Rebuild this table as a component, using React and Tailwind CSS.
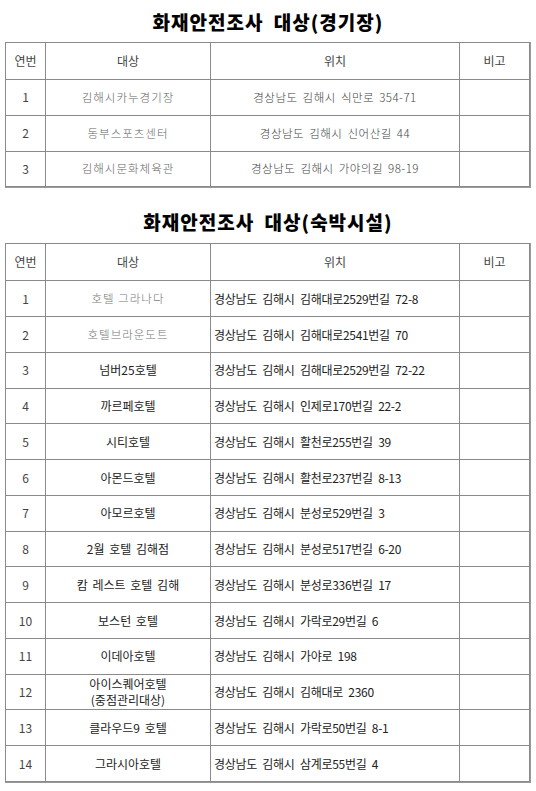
import React from 'react';

const stadiums = [
  { no: 1, name: '김해시카누경기장', addr: '경상남도 김해시 식만로 354-71' },
  { no: 2, name: '동부스포츠센터', addr: '경상남도 김해시 신어산길 44' },
  { no: 3, name: '김해시문화체육관', addr: '경상남도 김해시 가야의길 98-19' },
];

const lodgings = [
  { no: 1, name: '호텔 그라나다', addr: '경상남도 김해시 김해대로2529번길 72-8', faded: true },
  { no: 2, name: '호텔브라운도트', addr: '경상남도 김해시 김해대로2541번길 70', faded: true },
  { no: 3, name: '넘버25호텔', addr: '경상남도 김해시 김해대로2529번길 72-22' },
  { no: 4, name: '까르페호텔', addr: '경상남도 김해시 인제로170번길 22-2' },
  { no: 5, name: '시티호텔', addr: '경상남도 김해시 활천로255번길 39' },
  { no: 6, name: '아몬드호텔', addr: '경상남도 김해시 활천로237번길 8-13' },
  { no: 7, name: '아모르호텔', addr: '경상남도 김해시 분성로529번길 3' },
  { no: 8, name: '2월 호텔 김해점', addr: '경상남도 김해시 분성로517번길 6-20' },
  { no: 9, name: '캄 레스트 호텔 김해', addr: '경상남도 김해시 분성로336번길 17' },
  { no: 10, name: '보스턴 호텔', addr: '경상남도 김해시 가락로29번길 6' },
  { no: 11, name: '이데아호텔', addr: '경상남도 김해시 가야로 198' },
  { no: 12, name: '아이스퀘어호텔', sub: '(중점관리대상)', addr: '경상남도 김해시 김해대로 2360' },
  { no: 13, name: '클라우드9 호텔', addr: '경상남도 김해시 가락로50번길 8-1' },
  { no: 14, name: '그라시아호텔', addr: '경상남도 김해시 삼계로55번길 4' },
];

const font = { fontFamily: '"Noto Sans CJK KR", "Noto Sans", sans-serif' };

const TableHead = () => (
  <thead>
    <tr className="h-[37px] text-[12px] text-[#444]">
      <th className="border border-[#8a8a8a] font-normal">연번</th>
      <th className="border border-[#8a8a8a] font-normal">대상</th>
      <th className="border border-[#8a8a8a] font-normal">위치</th>
      <th className="border border-[#8a8a8a] font-normal">비고</th>
    </tr>
  </thead>
);

const Cols = () => (
  <colgroup>
    <col className="w-[40px]" />
    <col className="w-[165px]" />
    <col className="w-[249px]" />
    <col />
  </colgroup>
);

export default function App() {
  return (
    <div className="w-[536px] min-h-[791px] bg-white pl-[5px]" style={font}>
      <div className="w-[526px]">
        {/* 경기장 */}
        <div className="h-[42px] pt-[10px] text-center text-[19px] leading-[24px] font-black tracking-[1px] text-black [word-spacing:5px]">
          화재안전조사 대상(경기장)
        </div>
        <div className="border-r border-b border-[#9a9a9a]">
          <table className="w-[525px] table-fixed border-collapse border border-[#777]">
            <Cols />
            <TableHead />
            <tbody>
              {stadiums.map((r) => (
                <tr key={r.no} className="h-[35.8px] text-[11.5px]">
                  <td className="border border-[#8a8a8a] text-center text-[12px] text-[#444]">{r.no}</td>
                  <td className="border border-[#8a8a8a] text-center font-light tracking-[1px] text-[#666]">{r.name}</td>
                  <td className="border border-[#8a8a8a] text-center font-light tracking-[0.5px] text-[#444] [word-spacing:2px]">{r.addr}</td>
                  <td className="border border-[#8a8a8a]"></td>
                </tr>
              ))}
            </tbody>
          </table>
        </div>

        {/* 숙박시설 */}
        <div className="h-[55px] pt-[22px] text-center text-[19px] leading-[24px] font-black tracking-[1px] text-black [word-spacing:5px]">
          화재안전조사 대상(숙박시설)
        </div>
        <div className="border-r border-b border-[#9a9a9a]">
          <table className="w-[525px] table-fixed border-collapse border border-[#777]">
            <Cols />
            <TableHead />
            <tbody>
              {lodgings.map((r) => (
                <tr key={r.no} className="h-[35.75px] text-[12px]">
                  <td className="border border-[#8a8a8a] text-center text-[#444]">{r.no}</td>
                  <td
                    className={
                      r.faded
                        ? 'border border-[#8a8a8a] text-center text-[11.5px] font-light tracking-[1px] text-[#777]'
                        : 'border border-[#8a8a8a] text-center leading-[16px] text-[#222] [word-spacing:2px]'
                    }
                  >
                    <div>{r.name}</div>
                    {r.sub && <div>{r.sub}</div>}
                  </td>
                  <td className="border border-[#8a8a8a] pl-[3px] text-left tracking-[-0.3px] text-[#222] [word-spacing:3px]">{r.addr}</td>
                  <td className="border border-[#8a8a8a]"></td>
                </tr>
              ))}
            </tbody>
          </table>
        </div>
      </div>
    </div>
  );
}
